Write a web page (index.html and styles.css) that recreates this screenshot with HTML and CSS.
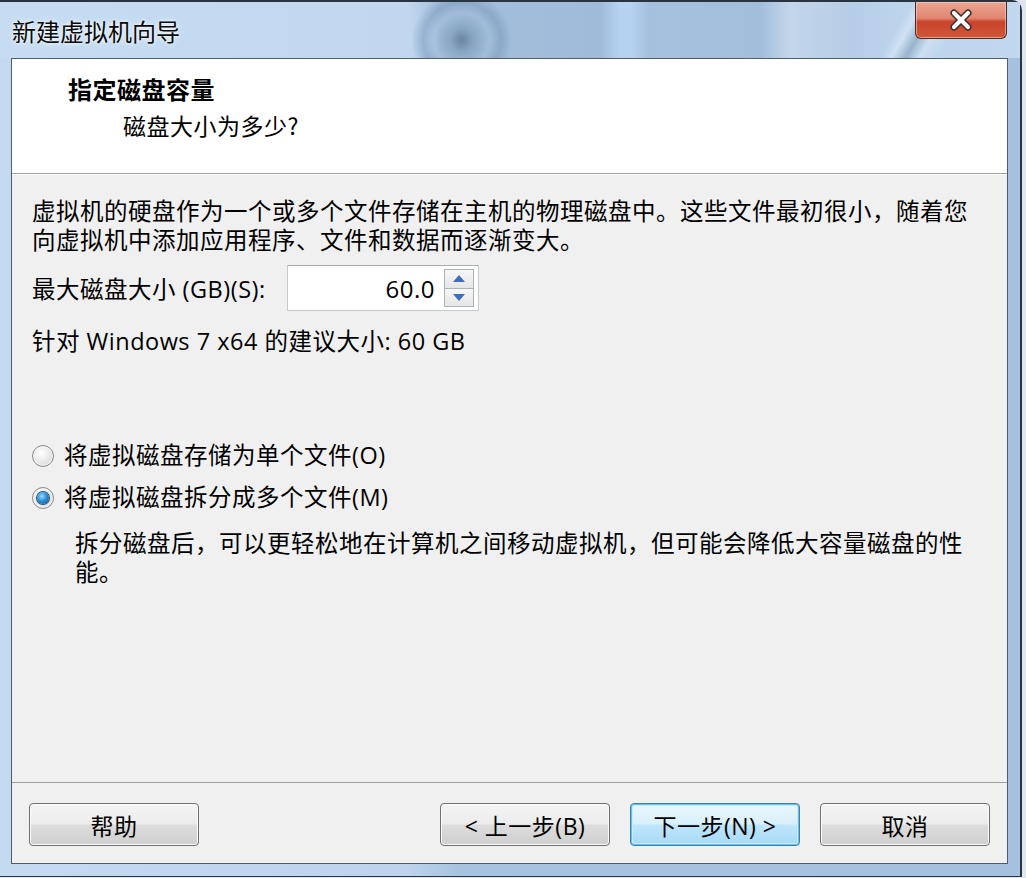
FILE: index.html
```html
<!DOCTYPE html>
<html lang="zh-CN">
<head>
<meta charset="utf-8">
<title>新建虚拟机向导</title>
<link rel="stylesheet" href="styles.css">
</head>
<body>
<div class="window">
  <div class="titlebar">
    <span class="title">新建虚拟机向导</span>
    <button class="close" aria-label="关闭">
      <svg width="30" height="22" viewBox="0 0 30 22">
        <path d="M8 4 L22 18 M22 4 L8 18" stroke="#3a2a28" stroke-width="7" stroke-linecap="round"/>
        <path d="M8 4 L22 18 M22 4 L8 18" stroke="#ffffff" stroke-width="4.2" stroke-linecap="round"/>
      </svg>
    </button>
  </div>

  <div class="client">
    <div class="header">
      <h1 class="heading">指定磁盘容量</h1>
      <p class="subheading">磁盘大小为多少?</p>
    </div>

    <div class="content">
      <p class="intro">虚拟机的硬盘作为一个或多个文件存储在主机的物理磁盘中。这些文件最初很小，随着您<br>向虚拟机中添加应用程序、文件和数据而逐渐变大。</p>

      <div class="size-row">
        <label class="size-label">最大磁盘大小 (GB)(S):</label>
        <div class="spinbox">
          <span class="spin-value">60.0</span>
          <div class="spin-buttons">
            <span class="spin-btn up"><svg width="12" height="7" viewBox="0 0 12 7"><path d="M6 0 L12 7 L0 7 Z" fill="#3d6cc0"/></svg></span>
            <span class="spin-btn down"><svg width="12" height="7" viewBox="0 0 12 7"><path d="M0 0 L12 0 L6 7 Z" fill="#3d6cc0"/></svg></span>
          </div>
        </div>
      </div>

      <p class="hint">针对 Windows 7 x64 的建议大小: 60 GB</p>

      <div class="options">
        <label class="radio"><span class="radio-mark"></span>将虚拟磁盘存储为单个文件(O)</label>
        <label class="radio checked"><span class="radio-mark"></span>将虚拟磁盘拆分成多个文件(M)</label>
        <p class="note">拆分磁盘后，可以更轻松地在计算机之间移动虚拟机，但可能会降低大容量磁盘的性<br>能。</p>
      </div>
    </div>

    <div class="footer">
      <button class="btn">帮助</button>
      <button class="btn back">&lt; 上一步(B)</button>
      <button class="btn primary">下一步(N) &gt;</button>
      <button class="btn">取消</button>
    </div>
  </div>
</div>
</body>
</html>
```

FILE: styles.css
```css
* {
  box-sizing: border-box;
}

html,
body {
  margin: 0;
  padding: 0;
}

body {
  width: 1026px;
  height: 878px;
  overflow: hidden;
  background: #dfe6ee;
  font-family: "Open Sans", "Noto Sans CJK SC", sans-serif;
  color: #000;
}

/* Aero window frame */
.window {
  width: 1022px;
  height: 877px;
  display: flex;
  flex-direction: column;
  padding: 0 12px 12px 11px;
  border-top: 2px solid #2a3340;
  border-right: 2px solid #2a3340;
  border-bottom: 1px solid #2a3340;
  border-top-right-radius: 10px;
  background:
    linear-gradient(90deg, #c3daf1 0%, #bcd4ec 40%, #a8c3df 45%, #a5c1de 100%);
}

.titlebar {
  height: 56px;
  flex: none;
  display: flex;
  align-items: flex-start;
  margin: 0 -12px 0 -11px;
  padding: 0 13px 0 12px;
  background:
    radial-gradient(circle at 462px 38px, rgba(70, 95, 125, 0.6) 0, rgba(90, 120, 150, 0.35) 12px, rgba(140, 170, 200, 0) 28px),
    radial-gradient(ellipse 50px 48px at 462px 38px, rgba(120, 150, 180, 0) 55%, rgba(100, 130, 165, 0.35) 78%, rgba(140, 170, 200, 0) 100%),
    linear-gradient(90deg, rgba(255, 255, 255, 0) 600px, rgba(190, 220, 250, 0.7) 620px, rgba(190, 220, 250, 0.7) 630px, rgba(255, 255, 255, 0) 650px),
    linear-gradient(120deg, rgba(255, 255, 255, 0) 790px, rgba(230, 240, 250, 0.5) 800px, rgba(110, 140, 170, 0.45) 812px, rgba(230, 240, 250, 0.4) 824px, rgba(255, 255, 255, 0) 840px),
    linear-gradient(90deg, #c5dcf2 0px, #c0d7ef 410px, #a3bfdc 440px, #9fbbd9 600px, #a6c1de 660px, #a2bedb 760px, #c3d6ea 790px, #b5cde6 850px, #bcd4ec 900px, #c1d8ef 1026px);
}

.title {
  font-family: "Noto Sans CJK SC", sans-serif;
  font-size: 24px;
  line-height: 56px;
  margin-top: 1px;
  color: #0a0a0a;
  text-shadow: 0 0 6px rgba(255, 255, 255, 0.9), 0 0 3px rgba(255, 255, 255, 0.9);
}

.close {
  margin-left: auto;
  width: 92px;
  height: 37px;
  padding: 0;
  border: 1px solid #4a2a24;
  border-top: none;
  border-radius: 0 0 6px 6px;
  background: linear-gradient(#eba591 0%, #e08670 45%, #c8432a 55%, #d0573a 100%);
  box-shadow: inset 0 0 0 1px rgba(255, 215, 200, 0.55);
  display: flex;
  align-items: center;
  justify-content: center;
}

/* Dialog client area */
.client {
  flex: 1;
  display: flex;
  flex-direction: column;
  border: 1px solid #525c68;
  background: #f0f0f0;
}

.header {
  flex: none;
  height: 115px;
  background: #fff;
  border-bottom: 1px solid #a0a0a0;
  box-shadow: 0 1px 0 #fff;
  padding: 14px 0 0 56px;
}

.heading {
  margin: 0;
  font-family: "Noto Sans CJK SC", sans-serif;
  font-size: 24px;
  font-weight: 700;
  line-height: 32px;
  letter-spacing: 0.5px;
}

.subheading {
  margin: 5px 0 0 55px;
  font-family: "Noto Sans CJK SC", sans-serif;
  font-size: 23px;
  line-height: 30px;
  letter-spacing: 0.5px;
}

.content {
  flex: 1;
  padding: 23px 20px 0 20px;
  font-size: 23.5px;
  letter-spacing: 0.5px;
}

.intro {
  margin: 0;
  line-height: 29px;
}

.size-row {
  display: flex;
  align-items: center;
  margin-top: 10px;
}

.size-label {
  width: 255px;
  flex: none;
}

.spinbox {
  width: 192px;
  height: 46px;
  display: flex;
  align-items: center;
  background: #fff;
  border: 1px solid #c4cad2;
  border-top-color: #abadb3;
  padding: 0 4px 0 6px;
}

.spin-value {
  flex: 1;
  text-align: right;
  font-size: 24px;
  padding-right: 9px;
}

.spin-buttons {
  width: 30px;
  height: 38px;
  display: flex;
  flex-direction: column;
}

.spin-btn {
  flex: 1;
  display: flex;
  align-items: center;
  justify-content: center;
  border: 1px solid #acb2ba;
  background: linear-gradient(#f7f7f7, #e6e6e6);
}

.spin-btn + .spin-btn {
  border-top: none;
}

.hint {
  margin: 16px 0 0;
  line-height: 29px;
}

.options {
  margin-top: 85px;
}

.radio {
  display: flex;
  align-items: center;
  gap: 10px;
  line-height: 29px;
}

.radio + .radio {
  margin-top: 13px;
}

.radio-mark {
  width: 22px;
  height: 22px;
  flex: none;
  border-radius: 50%;
  border: 1px solid #8a8a8a;
  background: radial-gradient(circle at 40% 35%, #ffffff 0, #eeeeee 40%, #cfcfcf 100%);
  box-shadow: inset 0 0 0 1px #fafafa;
  position: relative;
}

.radio.checked .radio-mark::after {
  content: "";
  position: absolute;
  left: 4px;
  top: 4px;
  width: 12px;
  height: 12px;
  border-radius: 50%;
  background: radial-gradient(circle at 40% 35%, #9fdcff 0, #2d8fd6 45%, #0d4f8e 100%);
  box-shadow: 0 0 0 1px #1b4f80;
}

.note {
  margin: 17px 0 0 43px;
  line-height: 29px;
}

/* Wizard button row */
.footer {
  flex: none;
  display: flex;
  gap: 20px;
  border-top: 1px solid #a0a0a0;
  padding: 20px 17px 17px;
}

.btn {
  width: 170px;
  height: 43px;
  border: 1px solid #707070;
  border-radius: 4px;
  font-family: "Open Sans", "Noto Sans CJK SC", sans-serif;
  font-size: 23px;
  letter-spacing: 0.5px;
  color: #000;
  background: linear-gradient(#f4f4f4 0%, #ececec 48%, #dddddd 52%, #cfcfcf 100%);
  box-shadow: inset 0 0 0 1px #fbfbfb;
  padding: 0;
}

.btn.back {
  margin-left: auto;
}

.btn.primary {
  border-color: #3c7fb1;
  background: linear-gradient(#eaf6fd 0%, #d9f0fc 48%, #bee6fd 52%, #a7d9f5 100%);
  box-shadow: inset 0 0 0 1px #5fc3f4, inset 0 0 0 2px #c9ecfc;
}
```
